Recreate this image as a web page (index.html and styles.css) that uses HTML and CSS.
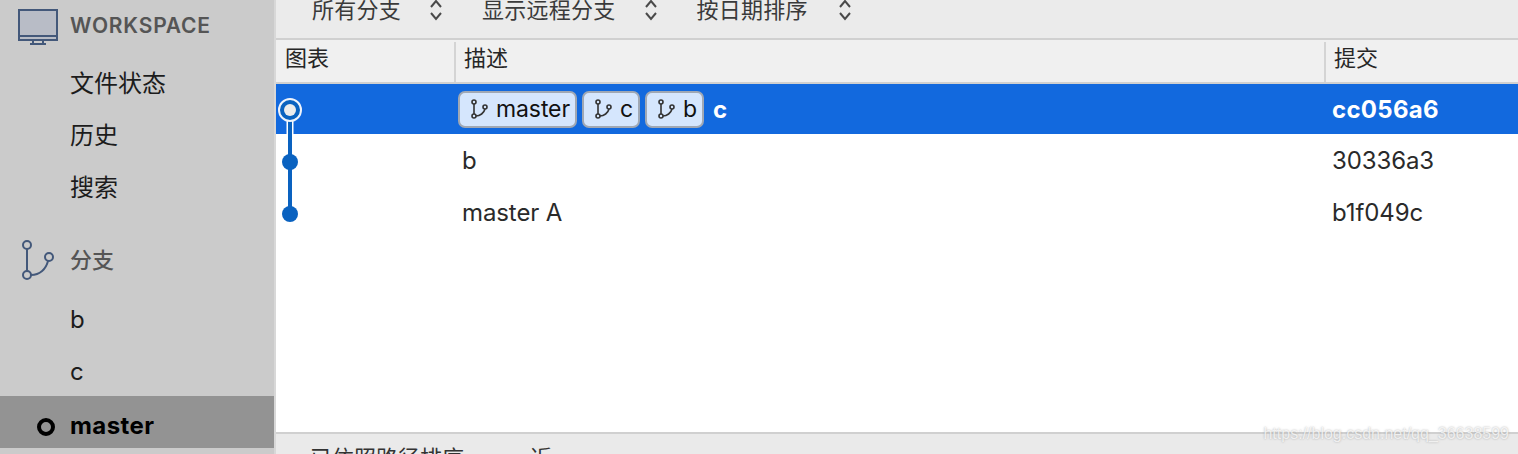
FILE: index.html
```html
<!DOCTYPE html>
<html lang="zh">
<head>
<meta charset="utf-8">
<title>Sourcetree</title>
<link rel="stylesheet" href="styles.css">
</head>
<body>
<div class="app">
  <aside class="sidebar">
    <div class="section workspace">
      <svg class="monitor" width="42" height="44" viewBox="0 0 42 44">
        <rect x="1" y="7" width="38" height="30" fill="#b8bcc6" stroke="#43587a" stroke-width="2"/>
        <path d="M1 33h38" stroke="#43587a" stroke-width="2" fill="none"/>
        <path d="M15 37v4M25 37v4" stroke="#43587a" stroke-width="2" fill="none"/>
        <path d="M12 41h16" stroke="#43587a" stroke-width="2" fill="none"/>
      </svg>
      <span class="section-title caps">WORKSPACE</span>
    </div>
    <div class="item cjk">文件状态</div>
    <div class="item cjk">历史</div>
    <div class="item cjk">搜索</div>
    <div class="section branches">
      <svg class="branch-big" width="36" height="44" viewBox="0 0 36 44">
        <circle cx="7" cy="5" r="4" fill="none" stroke="#43587a" stroke-width="2"/>
        <circle cx="7" cy="35" r="4" fill="none" stroke="#43587a" stroke-width="2"/>
        <circle cx="29" cy="17" r="4" fill="none" stroke="#43587a" stroke-width="2"/>
        <path d="M7 9v22M11 35c9 0 15-6 17-14" fill="none" stroke="#43587a" stroke-width="2"/>
      </svg>
      <span class="section-title branch-title">分支</span>
    </div>
    <div class="item">b</div>
    <div class="item">c</div>
    <div class="item current"><i class="head-dot"></i>master</div>
  </aside>

  <main class="main">
    <div class="toolbar">
      <span class="tool t1">所有分支</span>
      <svg class="updown" width="14" height="22" viewBox="0 0 14 22"><path d="M2 8l5-6 5 6M2 14l5 6 5-6" fill="none" stroke="#4a4a4a" stroke-width="2"/></svg>
      <span class="tool t2">显示远程分支</span>
      <svg class="updown" width="14" height="22" viewBox="0 0 14 22"><path d="M2 8l5-6 5 6M2 14l5 6 5-6" fill="none" stroke="#4a4a4a" stroke-width="2"/></svg>
      <span class="tool t3">按日期排序</span>
      <svg class="updown" width="14" height="22" viewBox="0 0 14 22"><path d="M2 8l5-6 5 6M2 14l5 6 5-6" fill="none" stroke="#4a4a4a" stroke-width="2"/></svg>
    </div>

    <div class="table-wrap">
      <div class="row head">
        <div class="cell first">图表</div>
        <div class="cell">描述</div>
        <div class="cell">提交</div>
      </div>
      <div class="row selected">
        <div class="cell first"></div>
        <div class="cell desc">
          <span class="tag"><svg class="tag-icon" width="18" height="20" viewBox="0 0 18 20"><circle cx="4" cy="3" r="2" fill="none" stroke="#333" stroke-width="1.6"/><circle cx="4" cy="17" r="2" fill="none" stroke="#333" stroke-width="1.6"/><circle cx="15" cy="8" r="2" fill="none" stroke="#333" stroke-width="1.6"/><path d="M4 5v10M6 17c4 0 8-3 9-7" fill="none" stroke="#333" stroke-width="1.6"/></svg>master</span>
          <span class="tag"><svg class="tag-icon" width="18" height="20" viewBox="0 0 18 20"><circle cx="4" cy="3" r="2" fill="none" stroke="#333" stroke-width="1.6"/><circle cx="4" cy="17" r="2" fill="none" stroke="#333" stroke-width="1.6"/><circle cx="15" cy="8" r="2" fill="none" stroke="#333" stroke-width="1.6"/><path d="M4 5v10M6 17c4 0 8-3 9-7" fill="none" stroke="#333" stroke-width="1.6"/></svg>c</span>
          <span class="tag"><svg class="tag-icon" width="18" height="20" viewBox="0 0 18 20"><circle cx="4" cy="3" r="2" fill="none" stroke="#333" stroke-width="1.6"/><circle cx="4" cy="17" r="2" fill="none" stroke="#333" stroke-width="1.6"/><circle cx="15" cy="8" r="2" fill="none" stroke="#333" stroke-width="1.6"/><path d="M4 5v10M6 17c4 0 8-3 9-7" fill="none" stroke="#333" stroke-width="1.6"/></svg>b</span>
          <span class="msg">c</span>
        </div>
        <div class="cell">cc056a6</div>
      </div>
      <div class="row">
        <div class="cell first"></div>
        <div class="cell">b</div>
        <div class="cell">30336a3</div>
      </div>
      <div class="row">
        <div class="cell first"></div>
        <div class="cell">master A</div>
        <div class="cell">b1f049c</div>
      </div>
      <svg class="graph" width="28" height="140" viewBox="0 0 28 140">
        <rect x="8.500" y="36" width="7" height="14" fill="#fff"/>
        <rect x="10" y="26" width="4" height="104" fill="#0a62c0"/>
        <circle cx="12" cy="130" r="8" fill="#0a62c0"/>
        <circle cx="12" cy="78" r="8" fill="#0a62c0"/>
        <circle cx="12" cy="26" r="11" fill="#0a62c0" stroke="#eef3fb" stroke-width="2"/>
        <circle cx="12" cy="26" r="6" fill="#ececec"/>
      </svg>
    </div>

    <div class="footer">
      <span class="sort">已依照路径排序</span>
      <span class="sort-extra">近</span>
    </div>
  </main>
</div>
<div class="watermark">https://blog.csdn.net/qq_36638599</div>
</body>
</html>
```
FILE: styles.css
```css
* { box-sizing: border-box; }
html, body { margin: 0; height: 100%; overflow: hidden; }
body {
  width: 1518px;
  height: 454px;
  position: relative;
  font-family: Inter, "Noto Sans CJK SC", sans-serif;
  color: #262626;
  background: #fff;
}
.app { display: flex; height: 454px; }

.sidebar {
  width: 276px;
  flex: none;
  background: #cbcbcb;
  border-right: 2px solid #d8d8d8;
  overflow: hidden;
  color: #1c1c1c;
}
.section { display: flex; align-items: center; color: #555; font-size: 22px; }
.workspace { height: 57px; padding-left: 18px; padding-bottom: 7px; }
.monitor { flex: none; margin-right: 10px; }
.branches { height: 80px; padding-left: 20px; padding-top: 21px; }
.branch-big { flex: none; margin-right: 14px; margin-top: -3px; }
.branch-title { margin-top: -11px; }
.section-title { font-weight: 500; }
.caps { font-size: 21px; letter-spacing: 0.8px; font-weight: 600; }
.item {
  height: 52px;
  padding-left: 70px;
  display: flex;
  align-items: center;
  font-size: 24px;
  letter-spacing: -0.2px;
}
.cjk { letter-spacing: 0; padding-bottom: 4px; }
.current {
  position: relative;
  margin-top: -1px;
  background: #939393;
  color: #000;
  font-weight: 700;
  letter-spacing: 0.4px;
  padding-top: 6px;
}
.head-dot {
  position: absolute;
  left: 37px;
  top: 22px;
  width: 18px;
  height: 18px;
  border: 4px solid #000;
  border-radius: 50%;
}

.main { flex: 1; min-width: 0; display: flex; flex-direction: column; background: #fff; }
.toolbar {
  height: 40px;
  flex: none;
  background: #ebebeb;
  border-bottom: 2px solid #d0d0d0;
  display: flex;
  align-items: center;
  padding: 0 0 18px 36px;
  font-size: 22px;
  color: #3a3a3a;
}
.tool { line-height: 20px; letter-spacing: 0.25px; }
.updown { flex: none; margin-left: 28px; margin-right: 39px; }
.t3 + .updown { margin-left: 30px; }

.table-wrap { flex: 1; position: relative; overflow: hidden; }
.row {
  display: grid;
  grid-template-columns: 179px 870px 1fr;
  height: 52px;
  font-size: 24px;
  letter-spacing: -0.1px;
  color: #2a2a2a;
}
.cell { display: flex; align-items: center; padding-left: 7px; min-width: 0; white-space: nowrap; }
.head {
  height: 44px;
  background: #f0f0f0;
  border-bottom: 2px solid #d0d0d0;
  font-size: 22px;
  letter-spacing: 0;
  color: #262626;
}
.head .cell { padding-left: 9px; padding-bottom: 11px; }
.head .cell + .cell { position: relative; }
.head .cell + .cell::before {
  content: "";
  position: absolute;
  left: -1px;
  top: 2px;
  bottom: 1px;
  width: 2px;
  background: #d4d4d4;
}
.selected {
  height: 50px;
  background: #1269de;
  color: #fff;
  font-weight: 700;
  letter-spacing: 0.3px;
}
.desc { padding-left: 3px; gap: 5px; }
.tag {
  height: 37px;
  display: inline-flex;
  align-items: center;
  padding: 0 5px 0 10px;
  background: #d5e6fd;
  border: 2px solid #a0a8b4;
  border-radius: 7px;
  color: #111;
  font-size: 23px;
  font-weight: 400;
  letter-spacing: -0.1px;
}
.tag-icon { margin-right: 8px; flex: none; }
.msg { margin-left: 4px; }
.graph { position: absolute; left: 2px; top: 44px; overflow: visible; }

.footer {
  height: 22px;
  flex: none;
  background: #eaeaea;
  border-top: 2px solid #d0d0d0;
  overflow: hidden;
  display: flex;
  padding: 13px 0 0 34px;
  font-size: 22px;
  line-height: 22px;
  color: #333;
  white-space: nowrap;
}
.sort-extra { margin-left: 66px; }

.watermark {
  position: absolute;
  right: 9px;
  top: 425px;
  font-family: "Liberation Sans", sans-serif;
  font-size: 16px;
  color: rgba(255, 255, 255, 0.75);
  text-shadow: 0 0 2px rgba(120, 120, 120, 0.6);
  white-space: nowrap;
}
```
